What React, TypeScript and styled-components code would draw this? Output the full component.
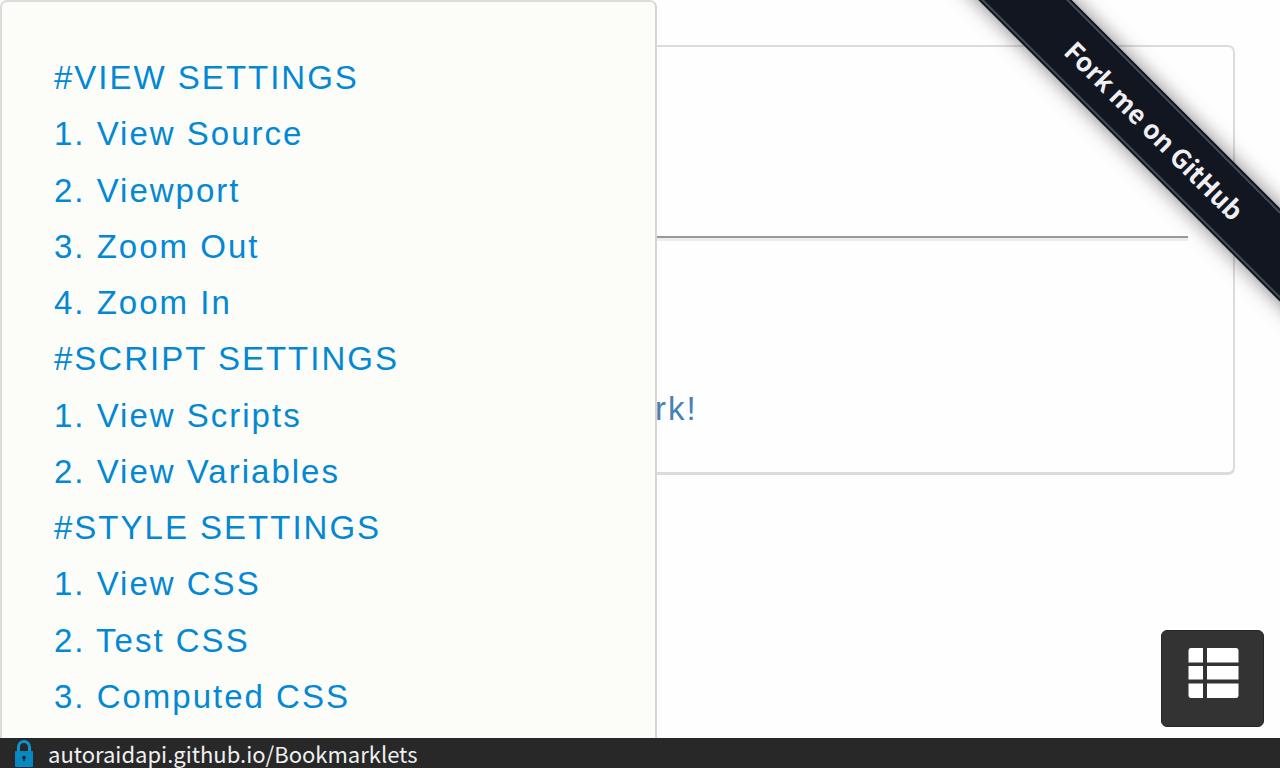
import React from "react";
import styled, { createGlobalStyle } from "styled-components";

const GlobalStyle = createGlobalStyle`
  *, *::before, *::after { box-sizing: border-box; }
  body {
    margin: 0;
    background: #fefefe;
    font-family: "Liberation Sans", Arial, sans-serif;
  }
`;

const Page = styled.div`
  display: flex;
  flex-direction: column;
  height: 100vh;
  overflow: hidden;
`;

const Stage = styled.div`
  position: relative;
  display: flex;
  flex: 1;
  min-height: 0;
`;

const Panel = styled.nav`
  position: relative;
  z-index: 1;
  display: flex;
  flex: 0 0 51.33%;
  margin-right: -2px;
  padding: 48px 52px 13px;
  background: #fcfdf8;
  border: 2px solid #dcdcdc;
  border-right-color: #d6d7d3;
  border-bottom: 0;
  border-radius: 7px 7px 0 0;
`;

const Menu = styled.ul`
  display: grid;
  flex: 1;
  grid-auto-rows: 1fr;
  align-items: center;
  margin: 0;
  padding: 0;
  list-style: none;
`;

const MenuLink = styled.a`
  color: #0288d4;
  font-size: 33px;
  line-height: 40px;
  letter-spacing: 2px;
  text-decoration: none;
  white-space: nowrap;
`;

const Content = styled.main`
  flex: 1;
  min-width: 0;
`;

const Card = styled.section`
  margin: 45px 45px 0 0;
  padding: 189px 0 43px;
  border: 2px solid #dcdcdc;
  border-width: 2px 2px 3px 0;
  border-radius: 0 7px 7px 0;
`;

const Divider = styled.hr`
  height: 5px;
  margin: 0 45px 148px 0;
  border: 0;
  border-top: 2px solid #999;
  background: #eee;
`;

const Note = styled.p`
  margin: 0;
  color: #4682b4;
  font-size: 33px;
  line-height: 40px;
  letter-spacing: 2px;
`;

const RibbonCorner = styled.div`
  position: absolute;
  top: 0;
  right: 0;
  width: 340px;
  height: 340px;
  overflow: hidden;
  pointer-events: none;
`;

const Ribbon = styled.a`
  position: absolute;
  top: 97px;
  right: -135px;
  display: flex;
  align-items: center;
  justify-content: center;
  width: 520px;
  height: 66px;
  background: #121620;
  box-shadow: 0 0 20px rgba(0, 0, 0, 0.5);
  color: #f0f0f2;
  font: bold 26px/40px "Noto Sans CJK SC", "Open Sans", sans-serif;
  text-decoration: none;
  transform: rotate(45deg);
  pointer-events: auto;

  &::before {
    content: "";
    position: absolute;
    inset: 2px -2px;
    border: 2px solid #484b55;
  }
`;

const MenuButton = styled.button`
  position: absolute;
  right: 16px;
  bottom: 11px;
  display: flex;
  justify-content: center;
  width: 103px;
  height: 97px;
  padding: 17px 0 0 2px;
  background: #333;
  border: 1px solid #262626;
  border-radius: 6px;
`;

const AddressBar = styled.footer`
  display: flex;
  align-items: center;
  gap: 14px;
  height: 30px;
  padding: 0 14px;
  background: #282828;
  color: #f0f0f0;
  font: 22px/30px "Noto Sans CJK SC", "Noto Sans", sans-serif;
`;

const items = [
  "#VIEW SETTINGS",
  "1. View Source",
  "2. Viewport",
  "3. Zoom Out",
  "4. Zoom In",
  "#SCRIPT SETTINGS",
  "1. View Scripts",
  "2. View Variables",
  "#STYLE SETTINGS",
  "1. View CSS",
  "2. Test CSS",
  "3. Computed CSS",
];

const ListIcon = () => (
  <svg width="51" height="51" viewBox="0 0 51 51" fill="#fff" aria-hidden="true">
    <path d="M3 0H15V14.500H0.500V3Q0.500 0 3 0ZM19 0H48Q50.500 0 50.500 3V14.500H19ZM0.500 18H15V31.500H0.500ZM19 18H50.500V31.500H19ZM0.500 35.500H15V50H3Q0.500 50 0.500 47ZM19 35.500H50.500V47Q50.500 50 48 50H19Z" />
  </svg>
);

const LockIcon = () => (
  <svg width="20" height="28" viewBox="0 0 20 28" aria-hidden="true">
    <path d="M4.500 13V8A5.500 5.500 0 0 1 15.500 8V13" fill="none" stroke="#0e93cf" strokeWidth="3" />
    <rect x="1" y="12" width="18" height="16" rx="1" fill="#0788c2" />
    <circle cx="10" cy="18.500" r="1.800" fill="#222" />
    <path d="M9.300 19H10.700V22H9.300Z" fill="#222" />
  </svg>
);

export default function App() {
  return (
    <Page>
      <GlobalStyle />
      <Stage>
        <Panel aria-label="Bookmarklets">
          <Menu>
            {items.map((item) => (
              <li key={item}>
                <MenuLink href="#">{item}</MenuLink>
              </li>
            ))}
          </Menu>
        </Panel>
        <Content>
          <Card>
            <Divider />
            <Note>rk!</Note>
          </Card>
        </Content>
        <RibbonCorner>
          <Ribbon href="#">Fork me on GitHub</Ribbon>
        </RibbonCorner>
        <MenuButton type="button" aria-label="Menu">
          <ListIcon />
        </MenuButton>
      </Stage>
      <AddressBar>
        <LockIcon />
        <span>autoraidapi.github.io/Bookmarklets</span>
      </AddressBar>
    </Page>
  );
}
